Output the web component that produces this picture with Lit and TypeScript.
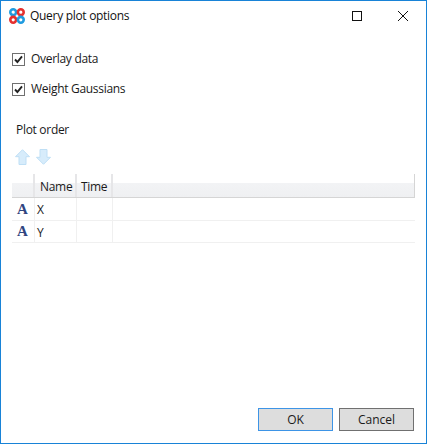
import { LitElement, html, css } from "lit";
import { customElement } from "lit/decorators.js";

@customElement("app-root")
export class AppRoot extends LitElement {
  static styles = css`
    :host { display: block; width: 427px; height: 444px; }
    .win { box-sizing: border-box; width: 427px; height: 444px; background: #fff; border: 1px solid #1883d7; display: flex; flex-direction: column; font: 12px "Open Sans", "Noto Sans", sans-serif; color: #1a1a1a; letter-spacing: -0.3px; }
    .title { display: flex; align-items: center; height: 29px; flex: none; }
    .logo { margin-left: 8px; width: 16px; height: 16px; flex: none; }
    .ttl { margin-left: 5px; flex: 1; color: #111; }
    .wb { width: 46px; height: 29px; display: flex; align-items: center; justify-content: center; }
    .content { flex: 1; display: flex; flex-direction: column; padding: 23px 11px 12px 11px; }
    .chk { display: flex; align-items: center; height: 13px; margin-bottom: 17px; }
    .chk span { padding-bottom: 2px; }
    .box { box-sizing: border-box; width: 13px; height: 13px; border: 1px solid #707070; background: #fff; margin-right: 6px; display: block; }
    .plot { margin: 9px 0 0 4px; line-height: 16px; }
    .tools { display: flex; gap: 6px; margin: 11px 0 0 3px; height: 16px; }
    .table { margin-top: 9px; width: 403px; }
    .row { display: grid; grid-template-columns: 23px 42px 36px 1fr; }
    .head { height: 23px; border-bottom: 1px solid #d5d5d5; background: linear-gradient(#fff 0, #fff 40%, #f2f3f5 41%, #eff0f2 100%); }
    .head > div { border-right: 2px solid #e6e6e8; display: flex; align-items: center; padding: 1px 0 0 5px; box-sizing: border-box; }
    .head > div:nth-child(3) { padding-left: 4px; }
    .head > div:last-child { border-right: 1px solid #d5d5d5; }
    .body { height: 21.5px; border-bottom: 1px solid #f0f0f0; }
    .body > div { border-right: 1px solid #f0f0f0; display: flex; align-items: center; padding: 2px 0 0 2px; box-sizing: border-box; }
    .body > div:last-child { border-right: 0; }
    .body > .ic { padding: 1px 0 0 5px; font: bold 15px "Liberation Serif", serif; color: #2f4580; letter-spacing: 0; }
    .actions { margin-top: auto; display: flex; justify-content: flex-end; gap: 6px; padding-right: 1px; }
    .btn { box-sizing: border-box; width: 75px; height: 23px; background: #dddddd; border: 1px solid #707070; display: flex; align-items: center; justify-content: center; letter-spacing: 0; }
    .btn.ok { border: 1px solid #3d94e6; }
  `;

  arrow(up: boolean) {
    const d = up
      ? "M7.5 0.7 L14.5 7.7 L11 7.7 L11 15.5 L4 15.5 L4 7.7 L0.5 7.7 Z"
      : "M4 0.5 L11 0.5 L11 8.3 L14.5 8.3 L7.5 15.3 L0.5 8.3 L4 8.3 Z";
    return html`<svg width="15" height="16" viewBox="0 0 15 16"><path d=${d} fill="#d7ecfb" stroke="#bfdff5" stroke-width="1"/></svg>`;
  }

  check(label: string) {
    return html`<div class="chk">
      <svg class="box" viewBox="0 0 11 11"><path d="M2 5.5 L4.4 8 L9 2.4" fill="none" stroke="#222" stroke-width="1.9"/></svg>
      <span>${label}</span>
    </div>`;
  }

  render() {
    return html`<div class="win">
      <div class="title">
        <svg class="logo" viewBox="0 0 16 16" fill="none" stroke-width="2.6">
          <circle cx="4.2" cy="4.2" r="2.9" stroke="#1f9be0"/>
          <circle cx="11.8" cy="4.2" r="2.9" stroke="#e5312f"/>
          <circle cx="4.2" cy="11.8" r="2.9" stroke="#e5312f"/>
          <circle cx="11.8" cy="11.8" r="2.9" stroke="#1f9be0"/>
        </svg>
        <span class="ttl">Query plot options</span>
        <div class="wb"><svg width="10" height="10" viewBox="0 0 10 10"><rect x="0.5" y="0.5" width="9" height="9" fill="none" stroke="#111"/></svg></div>
        <div class="wb"><svg width="10" height="10" viewBox="0 0 10 10"><path d="M0 0 L10 10 M10 0 L0 10" stroke="#111" fill="none"/></svg></div>
      </div>
      <div class="content">
        ${this.check("Overlay data")}
        ${this.check("Weight Gaussians")}
        <div class="plot">Plot order</div>
        <div class="tools">${this.arrow(true)}${this.arrow(false)}</div>
        <div class="table">
          <div class="row head"><div></div><div>Name</div><div>Time</div><div></div></div>
          <div class="row body"><div class="ic">A</div><div>X</div><div></div><div></div></div>
          <div class="row body"><div class="ic">A</div><div>Y</div><div></div><div></div></div>
        </div>
        <div class="actions">
          <div class="btn ok">OK</div>
          <div class="btn">Cancel</div>
        </div>
      </div>
    </div>`;
  }
}
